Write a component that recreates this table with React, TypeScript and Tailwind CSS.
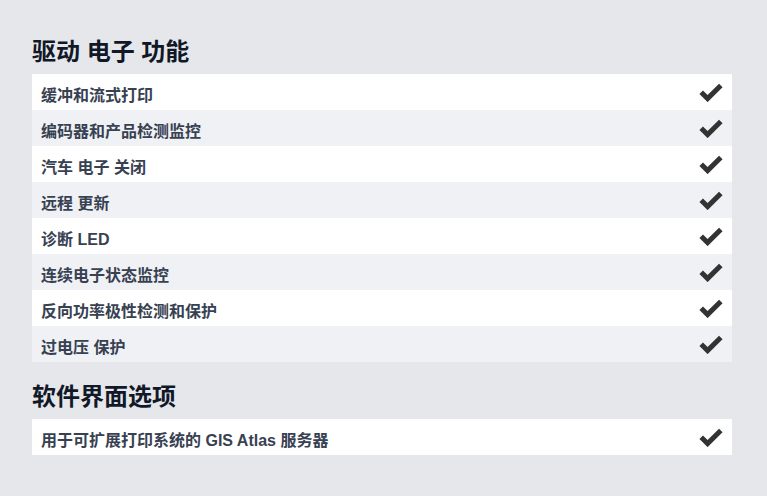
import React from "react";

const Check = () => (
  <svg width="24" height="20" viewBox="0 0 24 20" className="shrink-0">
    <polyline
      points="2.2,10.2 8.6,16.6 21.8,3.4"
      fill="none"
      stroke="#333333"
      strokeWidth="5"
      strokeLinejoin="miter"
      strokeLinecap="butt"
    />
  </svg>
);

const Row = ({ label, alt }: { label: string; alt: boolean }) => (
  <div
    className={`flex h-9 items-center justify-between pl-[9px] pr-[9px] ${
      alt ? "bg-[#f0f1f5]" : "bg-white"
    }`}
  >
    <span className="pt-2 text-[16px] font-bold text-[#374151]">{label}</span>
    <Check />
  </div>
);

const Section = ({ title, items, className = "" }: { title: string; items: string[]; className?: string }) => (
  <section className={className}>
    <h2 className="mb-[6px] text-[24px] font-bold leading-[32px] text-[#111827]">{title}</h2>
    <div>
      {items.map((it, i) => (
        <Row key={it} label={it} alt={i % 2 === 1} />
      ))}
    </div>
  </section>
);

export default function App() {
  return (
    <div
      className="min-h-[496px] bg-[#e5e7eb] px-8 pt-[36px]"
      style={{ fontFamily: '"Liberation Sans", "Noto Sans CJK SC", sans-serif' }}
    >
      <div className="w-[700px]">
        <Section
          title="驱动 电子 功能"
          items={[
            "缓冲和流式打印",
            "编码器和产品检测监控",
            "汽车 电子 关闭",
            "远程 更新",
            "诊断 LED",
            "连续电子状态监控",
            "反向功率极性检测和保护",
            "过电压 保护",
          ]}
        />
        <Section
          className="mt-[19px]"
          title="软件界面选项"
          items={["用于可扩展打印系统的 GIS Atlas 服务器"]}
        />
      </div>
    </div>
  );
}
